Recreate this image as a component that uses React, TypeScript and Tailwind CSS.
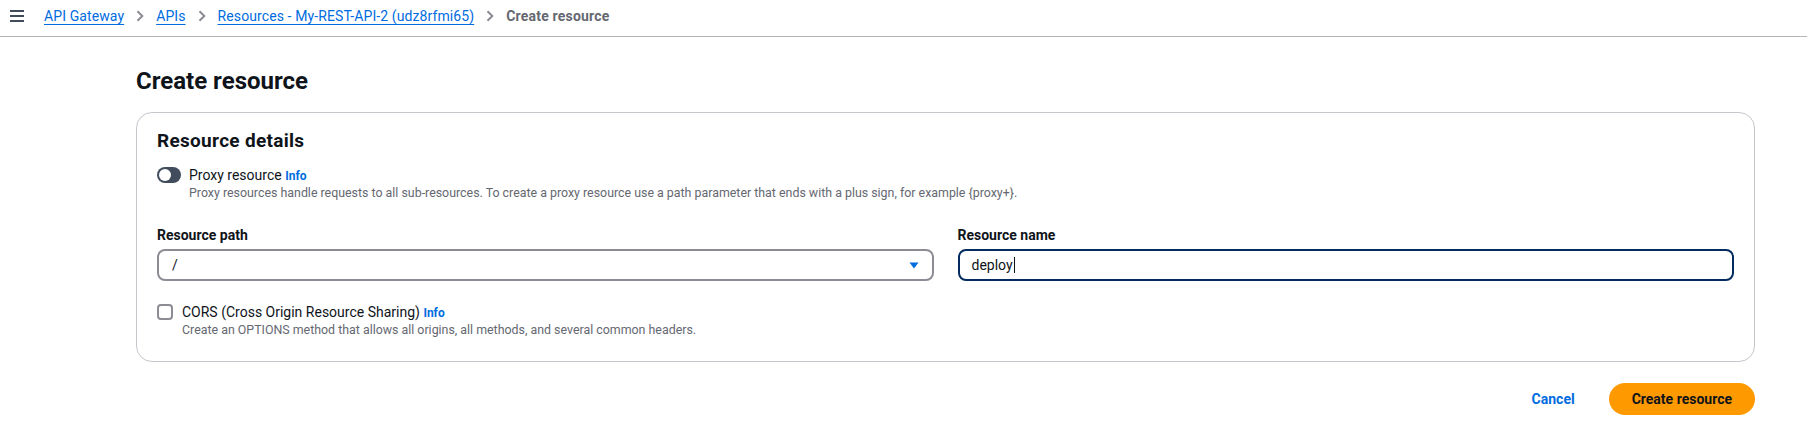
import React from 'react';

const font = { fontFamily: 'Roboto, "Liberation Sans", Arial, sans-serif' };

function Chevron() {
  return (
    <span className="flex w-[32px] justify-center">
      <svg width="8" height="12" viewBox="0 0 8 12" fill="none">
        <path d="M1.5 1.2 L6.3 6 L1.5 10.8" stroke="#8c8c94" strokeWidth="2" />
      </svg>
    </span>
  );
}

function Crumb({ children }: { children: React.ReactNode }) {
  return (
    <a className="text-[#006ce0] underline decoration-1 underline-offset-[3px] cursor-pointer tracking-[0.1px]">
      {children}
    </a>
  );
}

export default function App() {
  return (
    <div className="min-h-screen bg-white text-[#0f141a]" style={font}>
      {/* Top bar with breadcrumbs */}
      <div className="flex h-[37px] items-start border-b border-[#b4b4bb] pt-[6px] text-[14px] leading-[20px]">
        <div className="flex w-[44px] justify-start pl-[10px] pt-[4px]">
          <svg width="14" height="12" viewBox="0 0 14 12">
            <rect x="0" y="0" width="14" height="2" fill="#414d5c" />
            <rect x="0" y="5" width="14" height="2" fill="#414d5c" />
            <rect x="0" y="10" width="14" height="2" fill="#414d5c" />
          </svg>
        </div>
        <nav className="flex items-center">
          <Crumb>API Gateway</Crumb>
          <Chevron />
          <Crumb>APIs</Crumb>
          <Chevron />
          <Crumb>Resources - My-REST-API-2 (udz8rfmi65)</Crumb>
          <Chevron />
          <span className="font-bold tracking-[0.2px] text-[#656871]">Create resource</span>
        </nav>
      </div>

      <div className="pl-[136px] pr-[52px] pt-[29px]">
        <h1 className="text-[24px] font-bold leading-[30px]">Create resource</h1>

        {/* Resource details card */}
        <div className="mt-[16px] rounded-[16px] border border-[#c6c6cd] px-[20px] pt-[17px] pb-[23px]">
          <h2 className="text-[19px] font-bold leading-[22px] tracking-[0.3px]">Resource details</h2>

          <div className="mt-[14px] flex items-start gap-[8px]">
            <div className="flex h-[18px] items-center">
              <div className="relative h-[16px] w-[24px] rounded-full bg-[#414d5c]">
                <span className="absolute left-[2px] top-[2px] h-[12px] w-[12px] rounded-full bg-white" />
              </div>
            </div>
            <div>
              <div className="text-[14px] leading-[18px]">
                Proxy resource <span className="text-[12px] font-bold text-[#006ce0]">Info</span>
              </div>
              <div className="text-[12.4px] leading-[16px] text-[#656871]">
                Proxy resources handle requests to all sub-resources. To create a proxy resource use a path parameter that ends with a plus sign, for example {'{proxy+}'}.
              </div>
            </div>
          </div>

          <div className="mt-[24px] grid grid-cols-2 gap-[24px]">
            <div>
              <div className="text-[14px] font-bold leading-[20px]">Resource path</div>
              <div className="mt-[4px] flex h-[32px] items-center justify-between rounded-[8px] border-2 border-[#8c8c94] pl-[13px] pr-[13px] text-[14px]">
                <span>/</span>
                <svg width="10" height="7" viewBox="0 0 10 7">
                  <path d="M0.5 0.5 H9.5 L5 6.5 Z" fill="#006ce0" />
                </svg>
              </div>
            </div>
            <div>
              <div className="text-[14px] font-bold leading-[20px]">Resource name</div>
              <div className="mt-[4px] flex h-[32px] items-center rounded-[8px] border-2 border-[#032b5f] px-[12px] text-[14px]">
                <span>deploy</span>
                <span className="ml-[1px] h-[16px] w-[1px] bg-[#0f141a]" />
              </div>
            </div>
          </div>

          <div className="mt-[22px] flex items-start gap-[9px]">
            <div className="flex h-[18px] items-center">
              <div className="h-[16px] w-[16px] rounded-[4px] border-2 border-[#8c8c94] bg-white" />
            </div>
            <div>
              <div className="text-[14px] leading-[18px]">
                CORS (Cross Origin Resource Sharing) <span className="text-[12px] font-bold text-[#006ce0]">Info</span>
              </div>
              <div className="text-[12.4px] leading-[16px] text-[#656871]">
                Create an OPTIONS method that allows all origins, all methods, and several common headers.
              </div>
            </div>
          </div>
        </div>

        {/* Actions */}
        <div className="mt-[21px] flex items-center justify-end">
          <button className="text-[14px] font-bold text-[#006ce0]">Cancel</button>
          <button className="ml-[34px] h-[32px] rounded-full bg-[#ff9900] px-[23px] text-[14px] font-bold text-[#0f141a]">
            Create resource
          </button>
        </div>
      </div>
    </div>
  );
}
